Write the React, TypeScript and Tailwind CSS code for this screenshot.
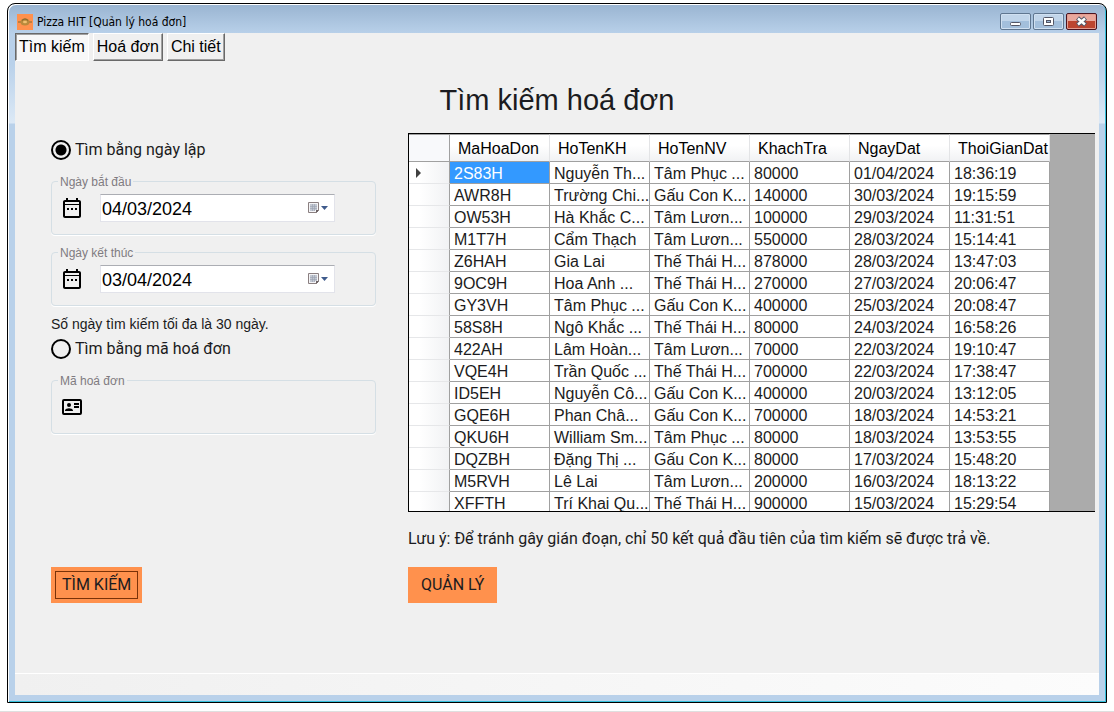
import { useState } from "react";
import type { ReactNode } from "react";

const columns = ["MaHoaDon", "HoTenKH", "HoTenNV", "KhachTra", "NgayDat", "ThoiGianDat"];

const rows: string[][] = [
  ["2S83H", "Nguyễn Th...", "Tâm Phục ...", "80000", "01/04/2024", "18:36:19"],
  ["AWR8H", "Trường Chi...", "Gấu Con K...", "140000", "30/03/2024", "19:15:59"],
  ["OW53H", "Hà Khắc C...", "Tâm Lươn...", "100000", "29/03/2024", "11:31:51"],
  ["M1T7H", "Cẩm Thạch", "Tâm Lươn...", "550000", "28/03/2024", "15:14:41"],
  ["Z6HAH", "Gia Lai", "Thế Thái H...", "878000", "28/03/2024", "13:47:03"],
  ["9OC9H", "Hoa Anh ...", "Thế Thái H...", "270000", "27/03/2024", "20:06:47"],
  ["GY3VH", "Tâm Phục ...", "Gấu Con K...", "400000", "25/03/2024", "20:08:47"],
  ["58S8H", "Ngô Khắc ...", "Thế Thái H...", "80000", "24/03/2024", "16:58:26"],
  ["422AH", "Lâm Hoàn...", "Tâm Lươn...", "70000", "22/03/2024", "19:10:47"],
  ["VQE4H", "Trần Quốc ...", "Thế Thái H...", "700000", "22/03/2024", "17:38:47"],
  ["ID5EH", "Nguyễn Cô...", "Gấu Con K...", "400000", "20/03/2024", "13:12:05"],
  ["GQE6H", "Phan Châ...", "Gấu Con K...", "700000", "18/03/2024", "14:53:21"],
  ["QKU6H", "William Sm...", "Tâm Phục ...", "80000", "18/03/2024", "13:53:55"],
  ["DQZBH", "Đặng Thị ...", "Gấu Con K...", "80000", "17/03/2024", "15:48:20"],
  ["M5RVH", "Lê Lai", "Tâm Lươn...", "200000", "16/03/2024", "18:13:22"],
  ["XFFTH", "Trí Khai Qu...", "Thế Thái H...", "900000", "15/03/2024", "15:29:54"],
];

function AppIcon() {
  return (
    <svg width="16" height="16" viewBox="0 0 16 16" aria-hidden="true">
      <rect width="16" height="16" fill="#ff914d" />
      <path d="M1 8h14" stroke="#a8783a" strokeWidth="1.5" />
      <ellipse cx="8" cy="8" rx="4.5" ry="3.5" fill="#b98a3c" />
      <path d="M5 6.5c2-2 4-2 6 0" stroke="#7b5a2b" fill="none" />
      <ellipse cx="8" cy="8" rx="2" ry="1.3" fill="#f0c070" />
    </svg>
  );
}

function CalendarIcon() {
  return (
    <svg width="24" height="24" viewBox="0 0 24 24" aria-hidden="true">
      <path
        d="M19 4h-1V2h-2v2H8V2H6v2H5C3.9 4 3 4.9 3 6v14c0 1.1.9 2 2 2h14c1.1 0 2-.9 2-2V6c0-1.1-.9-2-2-2zm0 16H5V9h14v11zm0-12H5V6h14v2z"
        fill="#000"
      />
      <path d="M7 12h2v2H7zM11 12h2v2h-2zM15 12h2v2h-2z" fill="#000" />
    </svg>
  );
}

function CardIcon() {
  return (
    <svg width="24" height="24" viewBox="0 0 24 24" aria-hidden="true">
      <path
        d="M20 4H4a2 2 0 0 0-2 2v12a2 2 0 0 0 2 2h16a2 2 0 0 0 2-2V6a2 2 0 0 0-2-2zm0 14H4V6h16v12zM14 8h5v2h-5zM14 11h5v2h-5zM9 8a2 2 0 1 1 0 4 2 2 0 0 1 0-4zM5 16v-.6c0-1.5 2.7-2.2 4-2.2s4 .7 4 2.2v.6z"
        fill="#000"
      />
    </svg>
  );
}

function DropIcon() {
  return (
    <svg width="22" height="14" viewBox="0 0 22 14" aria-hidden="true">
      <path d="M1.5 1.5h10v8l-2 2h-8z" fill="#f4f4f6" stroke="#8a7f80" />
      <path d="M3 3h7v6H8v1H3z" fill="#c3c8d2" />
      <path d="M3 5.5h7M3 7.5h7M5.5 3v7M7.5 3v7" stroke="#98a1b0" strokeWidth=".6" />
      <path d="M9 12V9h3z" fill="#6b6263" />
      <path d="M14 5h7l-3.5 4z" fill="#3f5b8c" />
    </svg>
  );
}

function CaptionButton({ label, danger, children }: { label: string; danger?: boolean; children: ReactNode }) {
  return (
    <button
      type="button"
      aria-label={label}
      className={
        danger
          ? "flex h-[17px] w-[31px] items-center justify-center rounded-xs border border-[#4b1420] bg-linear-to-b from-[#e9a79c] from-50% to-[#bc4530] to-50% shadow-[inset_0_0_0_1px_#e39c90]"
          : "flex h-[17px] w-[31px] items-center justify-center rounded-xs border border-[#5f7690] bg-linear-to-b from-[#c1d5ea] from-50% to-[#a3bfdc] to-50% shadow-[inset_0_0_0_1px_#d0e0f1]"
      }
    >
      {children}
    </button>
  );
}

function DateField({ id, label, initial }: { id: string; label: string; initial: string }) {
  const [value, setValue] = useState(initial);
  return (
    <Group label={label} htmlFor={id}>
      <CalendarIcon />
      <div className="ml-4 flex h-7 w-[235px] items-center border border-[#e2e3ea] border-t-[#abadb3] bg-white pr-[5px]">
        <input
          id={id}
          value={value}
          onChange={(e) => setValue(e.target.value)}
          className="min-w-0 flex-1 bg-transparent px-px pt-0.5 text-lg leading-6 text-black outline-none"
        />
        <button type="button" aria-label={`Chọn ${label}`}>
          <DropIcon />
        </button>
      </div>
    </Group>
  );
}

function Group({ label, htmlFor, children }: { label: string; htmlFor: string; children: ReactNode }) {
  return (
    <fieldset className="h-[61px] rounded-sm border border-[#d5dfe5] px-1.5 shadow-[0_1px_0_#fff]">
      <legend className="px-0.5 pt-0.5 text-xs leading-3 text-[#7f7b80]">
        <label htmlFor={htmlFor}>{label}</label>
      </legend>
      <div className="flex items-center px-0.5 pt-1.5">{children}</div>
    </fieldset>
  );
}

function RadioRow({ label, checked, onChange }: { label: string; checked: boolean; onChange: () => void }) {
  return (
    <label className="flex items-center gap-1 font-[Roboto,sans-serif] text-base leading-6">
      <input
        type="radio"
        name="mode"
        checked={checked}
        onChange={onChange}
        className="size-5 appearance-none rounded-full border-2 border-black checked:bg-radial checked:from-black checked:from-[5px] checked:to-transparent checked:to-[6px]"
      />
      {label}
    </label>
  );
}

const tabs = ["Tìm kiếm", "Hoá đơn", "Chi tiết"];

export default function App() {
  const [tab, setTab] = useState(0);
  const [mode, setMode] = useState(0);
  const [code, setCode] = useState("");

  return (
    <div className="flex min-h-screen flex-col border-b border-[#dfdfdf] bg-white pt-[3px] pr-[7px] pb-2 pl-[7px] font-['Liberation_Sans',Arial,sans-serif] text-[#1b1b20]">
      <div className="flex flex-1 flex-col rounded-t-lg border border-black bg-[linear-gradient(to_bottom,#99b4d1_0,#b9d1ea_30px,#b9d1ea_60px,#dce9f6_119px,#b9d1ea_120px)] px-[7px] pb-[7px] shadow-[inset_1px_1px_0_#fff,inset_-1px_-1px_0_#35c0dc]">
        <header className="flex h-[29px] shrink-0 items-center gap-1 px-0.5 pt-1.5">
          <AppIcon />
          <h2 className="flex-1 font-['DejaVu_Sans_Condensed','DejaVu_Sans',sans-serif] text-xs leading-4 text-black">
            Pizza HIT [Quản lý hoá đơn]
          </h2>
          <div className="flex gap-0.5">
            <CaptionButton label="Thu nhỏ">
              <svg width="13" height="11" viewBox="0 0 13 11">
                <rect x="1.5" y="6.5" width="10" height="3" rx="1" fill="#fff" stroke="#535666" />
              </svg>
            </CaptionButton>
            <CaptionButton label="Phóng to">
              <svg width="13" height="11" viewBox="0 0 13 11">
                <rect x="1.5" y="1.5" width="10" height="8" rx="1" fill="#fff" stroke="#535666" />
                <rect x="4.5" y="4.5" width="4" height="2" fill="#9db8d6" stroke="#535666" />
              </svg>
            </CaptionButton>
            <CaptionButton label="Đóng" danger>
              <svg width="13" height="11" viewBox="0 0 13 11">
                <path d="M2.5 2l8 7M10.5 2l-8 7" stroke="#535666" strokeWidth="4.5" />
                <path d="M3 2.5l7 6M10 2.5l-7 6" stroke="#fff" strokeWidth="2.5" />
              </svg>
            </CaptionButton>
          </div>
        </header>

        <div className="flex flex-1 flex-col bg-[#f0f0f0]">
          <nav className="flex gap-1">
            {tabs.map((t, i) => (
              <button
                key={t}
                type="button"
                aria-pressed={tab === i}
                onClick={() => setTab(i)}
                className={
                  tab === i
                    ? "h-7 border border-t-[#696969] border-r-white border-b-white border-l-[#696969] bg-[#f8f8f8] px-[3px] text-base leading-6 text-black shadow-[inset_1px_1px_0_#a0a0a0]"
                    : "h-7 border border-t-white border-r-[#696969] border-b-[#696969] border-l-white px-[3px] text-base leading-6 text-black shadow-[inset_-1px_-1px_0_#a0a0a0]"
                }
              >
                {t}
              </button>
            ))}
          </nav>

          <h1 className="pt-[21px] text-center text-[29px] leading-9">Tìm kiếm hoá đơn</h1>

          <main className="grid grid-cols-[325px_minmax(0,1fr)] gap-x-8 gap-y-4 pt-[15px] pr-1 pb-10 pl-9">
            <section className="flex flex-col pt-[5px]">
              <RadioRow label="Tìm bằng ngày lập" checked={mode === 0} onChange={() => setMode(0)} />
              <div className="flex flex-col gap-2.5 pt-3">
                <DateField id="from" label="Ngày bắt đầu" initial="04/03/2024" />
                <DateField id="to" label="Ngày kết thúc" initial="03/04/2024" />
              </div>
              <p className="pt-2 pb-[3px] text-sm leading-5">Số ngày tìm kiếm tối đa là 30 ngày.</p>
              <RadioRow label="Tìm bằng mã hoá đơn" checked={mode === 1} onChange={() => setMode(1)} />
              <div className="pt-3">
                <Group label="Mã hoá đơn" htmlFor="code">
                  <CardIcon />
                  <input
                    id="code"
                    value={code}
                    onChange={(e) => setCode(e.target.value)}
                    className="ml-4 h-7 w-[235px] bg-transparent text-lg outline-none"
                  />
                </Group>
              </div>
            </section>

            <section className="min-w-0">
              <div className="h-[379px] overflow-hidden border border-r-0 border-black bg-[#ababab]">
                <table className="w-[641px] table-fixed border-separate border-spacing-0 bg-white text-left text-base">
                  <colgroup>
                    <col className="w-[41px]" />
                    {columns.map((c) => (
                      <col key={c} className="w-[100px]" />
                    ))}
                  </colgroup>
                  <thead>
                    <tr className="h-7">
                      <th aria-label="Dòng" className="border-t border-r border-b border-[#a0a0a0] bg-[#f8f9fb] p-0" />
                      {columns.map((c) => (
                        <th
                          key={c}
                          className="border-t border-r border-b border-t-[#a0a0a0] border-r-[#e3e4e6] border-b-[#a0a0a0] bg-linear-to-b from-white from-40% to-[#f1f2f4] p-0 pt-0.5 pl-2 leading-6 font-normal whitespace-nowrap text-black"
                        >
                          {c}
                        </th>
                      ))}
                    </tr>
                  </thead>
                  <tbody>
                    {rows.map((r, i) => (
                      <tr key={r[0]} className="h-[22px]">
                        <th className="border-r border-b border-r-[#a0a0a0] border-b-[#e6e7e9] bg-linear-to-r from-white from-25% to-[#f1f2f4] p-0 pl-1.5">
                          {i === 0 && (
                            <svg width="6" height="10" viewBox="0 0 6 10" aria-hidden="true">
                              <path d="M1 0v10l5-5z" fill="#404040" />
                            </svg>
                          )}
                        </th>
                        {r.map((v, j) => (
                          <td
                            key={j}
                            className={
                              i === 0 && j === 0
                                ? "border-r border-b border-[#a0a0a0] bg-[#3399ff] p-0 pt-0.5 pl-1 leading-[19px] whitespace-nowrap text-white"
                                : "border-r border-b border-[#a0a0a0] p-0 pt-0.5 pl-1 leading-[19px] whitespace-nowrap"
                            }
                          >
                            {v}
                          </td>
                        ))}
                      </tr>
                    ))}
                  </tbody>
                </table>
              </div>
              <p className="pt-[15px] font-[Roboto,sans-serif] text-base leading-6">
                Lưu ý: Để tránh gây gián đoạn, chỉ 50 kết quả đầu tiên của tìm kiếm sẽ được trả về.
              </p>
            </section>

            <div>
              <button type="button" className="h-9 bg-[#ff914d] p-1 font-[Roboto,sans-serif]">
                <span className="flex h-7 items-center border border-[#7a3208] px-1.5 text-base">TÌM KIẾM</span>
              </button>
            </div>
            <div>
              <button type="button" className="h-9 bg-[#ff914d] px-[13px] font-[Roboto,sans-serif] text-base">
                QUẢN LÝ
              </button>
            </div>
          </main>

          <footer className="mt-auto h-[22px] border-t border-white bg-linear-to-r from-[#f0f0f0] to-[#fcfcfc]" />
        </div>
      </div>
    </div>
  );
}
